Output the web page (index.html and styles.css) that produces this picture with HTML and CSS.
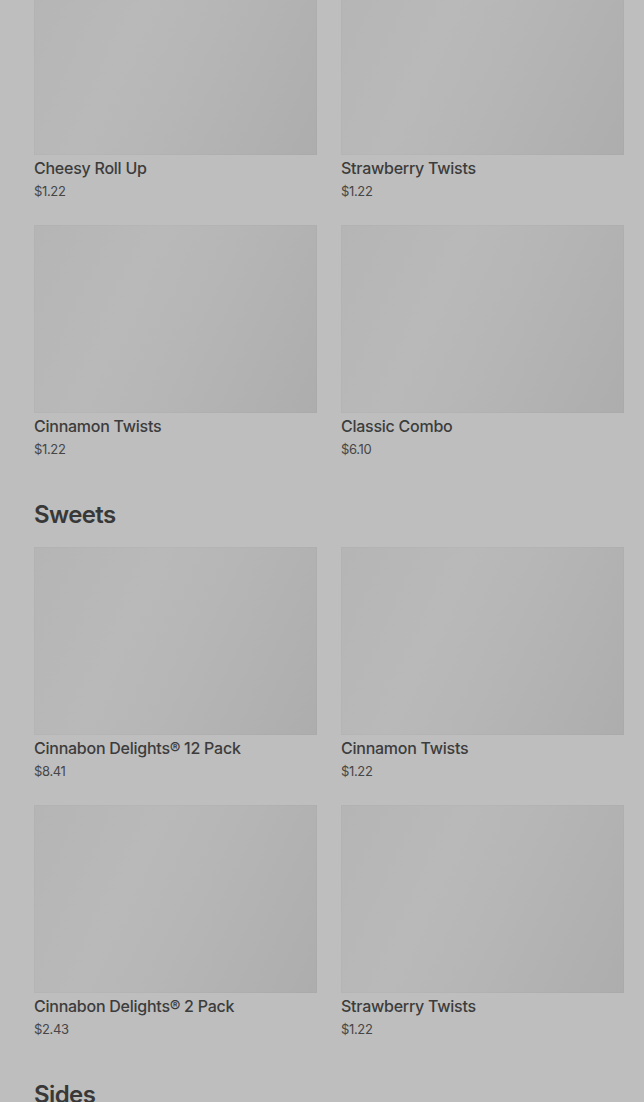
FILE: index.html
```html
<!DOCTYPE html>
<html lang="en">
<head>
    <meta charset="UTF-8">
    <meta name="viewport" content="width=device-width, initial-scale=1.0">
    <title>Menu</title>
    <link rel="stylesheet" href="styles.css">
</head>
<body>
    <div class="menu">
        <!-- Popular (scrolled) -->
        <section class="section first">
            <div class="grid">
                <div class="item">
                    <div class="thumb"></div>
                    <div class="name">Cheesy Roll Up</div>
                    <div class="price">$1.22</div>
                </div>
                <div class="item">
                    <div class="thumb"></div>
                    <div class="name">Strawberry Twists</div>
                    <div class="price">$1.22</div>
                </div>
                <div class="item">
                    <div class="thumb"></div>
                    <div class="name">Cinnamon Twists</div>
                    <div class="price">$1.22</div>
                </div>
                <div class="item">
                    <div class="thumb"></div>
                    <div class="name">Classic Combo</div>
                    <div class="price">$6.10</div>
                </div>
            </div>
        </section>

        <!-- Sweets -->
        <section class="section">
            <h2>Sweets</h2>
            <div class="grid">
                <div class="item">
                    <div class="thumb"></div>
                    <div class="name">Cinnabon Delights® 12 Pack</div>
                    <div class="price">$8.41</div>
                </div>
                <div class="item">
                    <div class="thumb"></div>
                    <div class="name">Cinnamon Twists</div>
                    <div class="price">$1.22</div>
                </div>
                <div class="item">
                    <div class="thumb"></div>
                    <div class="name">Cinnabon Delights® 2 Pack</div>
                    <div class="price">$2.43</div>
                </div>
                <div class="item">
                    <div class="thumb"></div>
                    <div class="name">Strawberry Twists</div>
                    <div class="price">$1.22</div>
                </div>
            </div>
        </section>

        <!-- Sides -->
        <section class="section">
            <h2>Sides</h2>
        </section>
    </div>
</body>
</html>
```

FILE: styles.css
```css
/* General Styles */
body {
    margin: 0;
    padding: 0;
    background: #bebebe;
    color: #3a3a3a;
    font-family: Inter, "Noto Sans", Arial, sans-serif;
    overflow: hidden;
}

.menu {
    margin-top: -33px;
    padding: 0 20px 0 34px;
}

.section {
    padding-top: 38px;
}

.section.first {
    padding-top: 0;
}

h2 {
    margin: 0 0 16px;
    font-size: 24px;
    line-height: 32px;
    font-weight: 600;
    letter-spacing: -0.6px;
    color: #383838;
}

.grid {
    display: grid;
    grid-template-columns: 1fr 1fr;
    column-gap: 24px;
    row-gap: 22px;
}

.thumb {
    height: 188px;
    background: linear-gradient(115deg, #b5b5b5 0%, #b9b9b9 35%, #b6b6b6 55%, #b1b1b1 80%, #adadad 100%);
    box-shadow: inset 0 0 0 1px rgba(0, 0, 0, 0.015);
}

.name {
    margin-top: 2px;
    font-size: 16px;
    line-height: 22px;
    font-weight: 500;
    letter-spacing: -0.25px;
    color: #3c3c3c;
}

.price {
    font-size: 13px;
    line-height: 24px;
    letter-spacing: -0.35px;
    color: #464646;
}
```
